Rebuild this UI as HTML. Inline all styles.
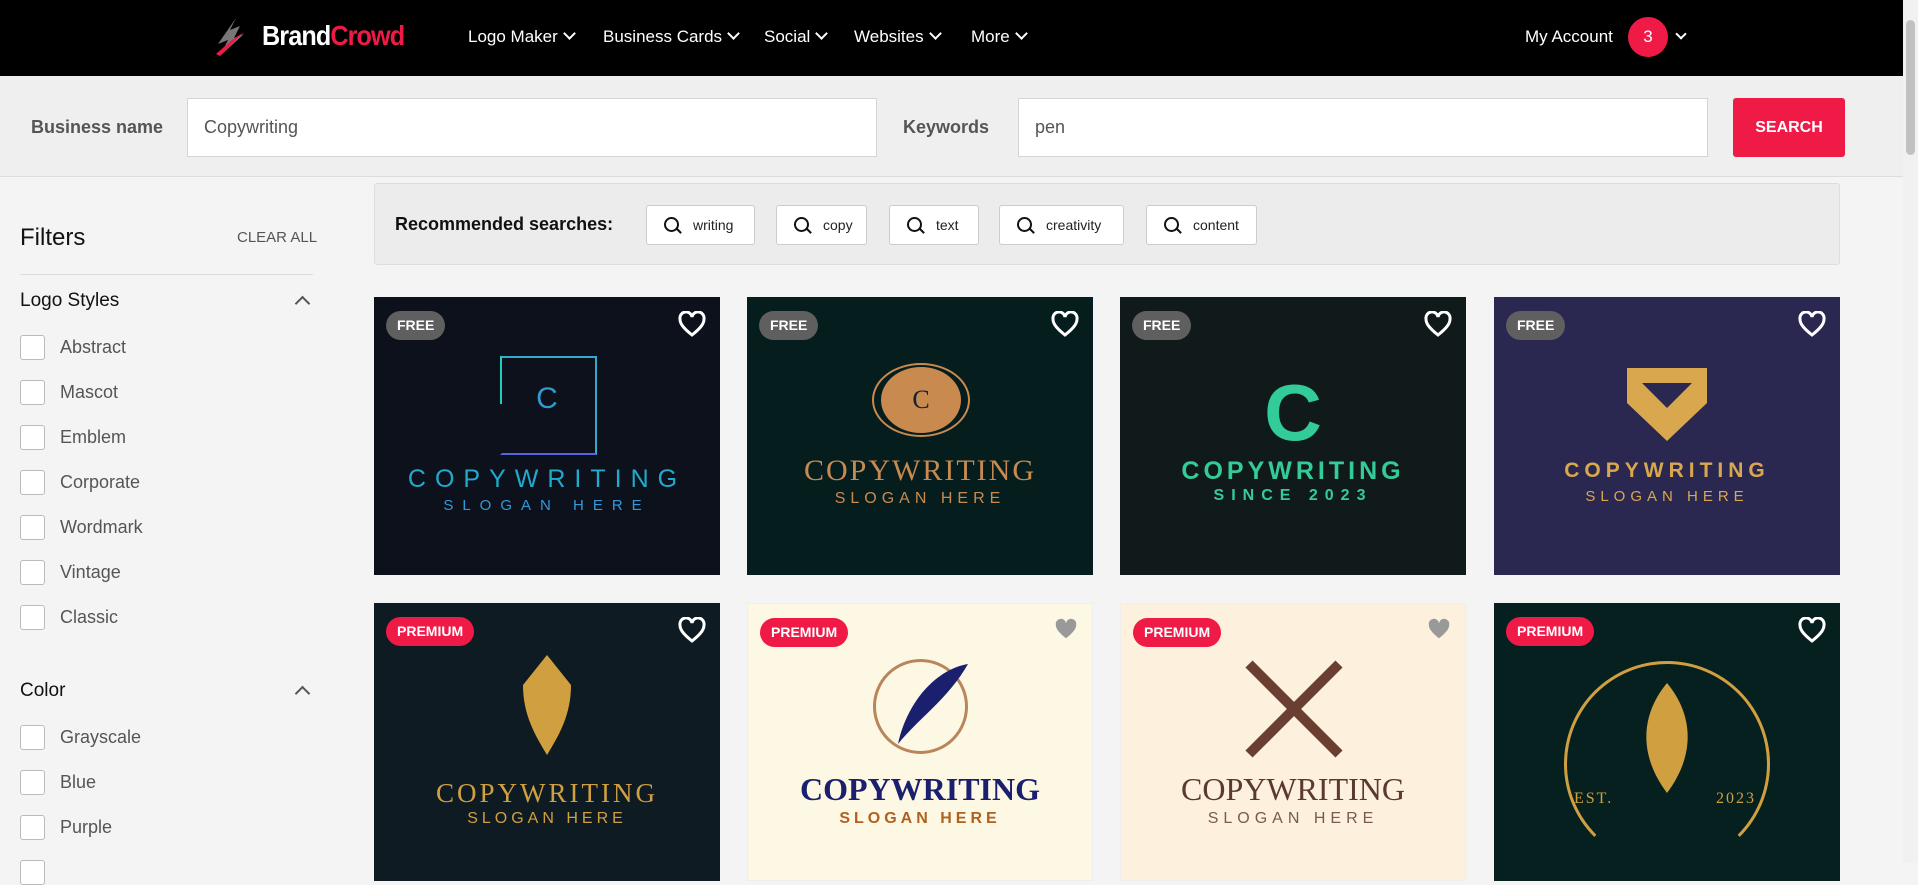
<!DOCTYPE html>
<html><head><meta charset="utf-8"><style>
*{box-sizing:border-box;margin:0;padding:0}
body{width:1918px;height:863px;overflow:hidden;background:#f4f4f4;font-family:"Liberation Sans",sans-serif;position:relative;color:#222}
.hdr{position:absolute;left:0;top:0;width:1903px;height:76px;background:#000}
.nav{position:absolute;top:27px;color:#fff;font-size:17px}
.nav:after{content:"";display:inline-block;width:7px;height:7px;border-right:2px solid #fff;border-bottom:2px solid #fff;transform:rotate(45deg);margin-left:7px;position:relative;top:-4px}
.nav.na:after{display:none}
.band{position:absolute;left:0;top:76px;width:1903px;height:101px;background:#efefef;border-bottom:1px solid #ddd}
.lbl{position:absolute;top:117px;font-size:18px;color:#555;font-weight:bold}
.inp{position:absolute;top:98px;height:59px;background:#fff;border:1px solid #d4d4d4;font-size:18px;color:#555;padding:18px 16px}
.btn{position:absolute;left:1733px;top:98px;width:112px;height:59px;background:#f01a47;color:#fff;font-weight:bold;font-size:16px;text-align:center;line-height:59px;border-radius:3px}
.side{position:absolute;left:20px}
.cb{position:absolute;left:20px;width:25px;height:25px;border:1px solid #bbb;border-radius:3px;background:#fff}
.cbl{position:absolute;left:60px;font-size:18px;color:#555}
.chev{position:absolute;left:297px;width:11px;height:11px;border-left:2px solid #555;border-top:2px solid #555;transform:rotate(45deg)}
.rec{position:absolute;left:374px;top:183px;width:1466px;height:82px;background:#ececec;border:1px solid #ddd;border-radius:3px}
.chip{position:absolute;top:205px;height:40px;background:#fff;border:1px solid #ccc;border-radius:3px;font-size:14px;line-height:38px;padding-left:46px;color:#222}
.chip:before{content:"";position:absolute;left:17px;top:11px;width:11px;height:11px;border:2px solid #111;border-radius:50%}
.chip:after{content:"";position:absolute;left:29px;top:24px;width:6px;height:2px;background:#111;transform:rotate(45deg)}
.card{position:absolute;width:346px;height:278px;overflow:hidden;text-align:center}
.bdg{position:absolute;left:12px;top:14px;height:29px;line-height:29px;padding:0 11px;border-radius:15px;color:#fff;font-weight:bold;font-size:14px}
.free{background:#5f5f5f}.prem{background:#f01a47}
.heart{position:absolute;right:14px;top:14px}
.t1{position:absolute;left:0;width:100%;font-size:27px;letter-spacing:5px}
.t2{position:absolute;left:0;width:100%;font-size:16px;letter-spacing:6px}
</style></head><body>
<div class="hdr">
<svg style="position:absolute;left:214px;top:18px" width="40" height="38" viewBox="0 0 40 38"><path d="M22 0 L16 12 L26 8 L20 20 L30 16 L6 38 L14 22 L4 26 Z" fill="#777"/><path d="M30 14 L6 38 L2 36 L18 22 Z" fill="#f01a47"/></svg>
<div style="position:absolute;left:262px;top:20px;font-size:28px;color:#fff;letter-spacing:-1px;font-weight:bold;transform:scaleX(0.9);transform-origin:left">Brand<span style="color:#f01a47">Crowd</span></div>
<div class="nav" style="left:468px">Logo Maker</div>
<div class="nav" style="left:603px">Business Cards</div>
<div class="nav" style="left:764px">Social</div>
<div class="nav" style="left:854px">Websites</div>
<div class="nav" style="left:971px">More</div>
<div class="nav na" style="left:1525px">My Account</div>
<div style="position:absolute;left:1628px;top:17px;width:40px;height:40px;border-radius:50%;background:#f01a47;color:#fff;text-align:center;line-height:40px;font-size:17px">3</div>
<div style="position:absolute;left:1677px;top:30px;width:8px;height:8px;border-right:2px solid #fff;border-bottom:2px solid #fff;transform:rotate(45deg)"></div>
</div>
<div style="position:absolute;left:1903px;top:0;width:15px;height:863px;background:#f1f1f1"><div style="margin:20px 3px;width:9px;height:135px;background:#c1c1c1;border-radius:5px"></div></div>
<div class="band"></div>
<div class="lbl" style="left:31px">Business name</div>
<div class="inp" style="left:187px;width:690px">Copywriting</div>
<div class="lbl" style="left:903px">Keywords</div>
<div class="inp" style="left:1018px;width:690px">pen</div>
<div class="btn">SEARCH</div>

<div class="side" style="top:224px;font-size:24px;color:#111">Filters</div>
<div class="side" style="left:237px;top:229px;font-size:15px;color:#555">CLEAR ALL</div>
<div style="position:absolute;left:20px;top:274px;width:293px;height:1px;background:#ddd"></div>
<div class="side" style="top:290px;font-size:19px;color:#111">Logo Styles</div>
<div class="chev" style="top:298px"></div>
<div class="cb" style="top:335px"></div><div class="cbl" style="top:337px">Abstract</div>
<div class="cb" style="top:380px"></div><div class="cbl" style="top:382px">Mascot</div>
<div class="cb" style="top:425px"></div><div class="cbl" style="top:427px">Emblem</div>
<div class="cb" style="top:470px"></div><div class="cbl" style="top:472px">Corporate</div>
<div class="cb" style="top:515px"></div><div class="cbl" style="top:517px">Wordmark</div>
<div class="cb" style="top:560px"></div><div class="cbl" style="top:562px">Vintage</div>
<div class="cb" style="top:605px"></div><div class="cbl" style="top:607px">Classic</div>
<div class="side" style="top:680px;font-size:19px;color:#111">Color</div>
<div class="chev" style="top:688px"></div>
<div class="cb" style="top:725px"></div><div class="cbl" style="top:727px">Grayscale</div>
<div class="cb" style="top:770px"></div><div class="cbl" style="top:772px">Blue</div>
<div class="cb" style="top:815px"></div><div class="cbl" style="top:817px">Purple</div>
<div class="cb" style="top:860px"></div>

<div class="rec"><div style="position:absolute;left:20px;top:30px;font-size:18px;font-weight:bold;color:#111">Recommended searches:</div></div>
<div class="chip" style="left:646px;width:109px">writing</div>
<div class="chip" style="left:776px;width:91px">copy</div>
<div class="chip" style="left:889px;width:90px">text</div>
<div class="chip" style="left:999px;width:125px">creativity</div>
<div class="chip" style="left:1146px;width:111px">content</div>

<!-- row 1 -->
<div class="card" style="left:374px;top:297px;background:#0c111c">
<div style="position:absolute;left:126px;top:59px;width:97px;height:99px;border:2px solid #3ac;border-left-color:transparent;border-bottom-color:#56d"></div>
<div style="position:absolute;left:126px;top:59px;width:2px;height:48px;background:#2cb"></div>
<div style="position:absolute;left:0;width:100%;top:85px;font-size:30px;color:#39c">C</div>
<div class="t1" style="top:168px;color:#2ac;font-size:25px;letter-spacing:9px">COPYWRITING</div>
<div class="t2" style="top:200px;color:#39d;letter-spacing:9px;font-size:15px">SLOGAN HERE</div>
<div class="bdg free">FREE</div><svg class="heart" width="28" height="26" viewBox="0 0 28 26"><path d="M14 24 C4 16 2 12 2 8 A6 6 0 0 1 14 6 A6 6 0 0 1 26 8 C26 12 24 16 14 24Z" fill="none" stroke="#fff" stroke-width="3"/></svg></div>
<div class="card" style="left:747px;top:297px;background:#061d1d">
<div style="position:absolute;left:125px;top:66px;width:98px;height:74px;border:2px solid #c98a50;border-radius:50%"></div>
<div style="position:absolute;left:134px;top:70px;width:80px;height:66px;background:#c98a50;border-radius:50%;font-size:26px;line-height:66px;color:#123;font-family:'Liberation Serif',serif">C</div>
<div class="t1" style="top:157px;color:#c98a50;font-family:'Liberation Serif',serif;font-size:30px;letter-spacing:2px">COPYWRITING</div>
<div class="t2" style="top:193px;color:#c98a50;letter-spacing:5px">SLOGAN HERE</div>
<div class="bdg free">FREE</div><svg class="heart" width="28" height="26" viewBox="0 0 28 26"><path d="M14 24 C4 16 2 12 2 8 A6 6 0 0 1 14 6 A6 6 0 0 1 26 8 C26 12 24 16 14 24Z" fill="none" stroke="#fff" stroke-width="3"/></svg></div>
<div class="card" style="left:1120px;top:297px;background:#111a1b">
<div style="position:absolute;left:0;width:100%;top:70px;font-size:80px;font-weight:bold;color:#3c9">C</div>
<div class="t1" style="top:160px;color:#3c9;font-weight:bold;font-size:25px;letter-spacing:4px">COPYWRITING</div>
<div class="t2" style="top:190px;color:#3c9;font-weight:bold;letter-spacing:7px">SINCE 2023</div>
<div class="bdg free">FREE</div><svg class="heart" width="28" height="26" viewBox="0 0 28 26"><path d="M14 24 C4 16 2 12 2 8 A6 6 0 0 1 14 6 A6 6 0 0 1 26 8 C26 12 24 16 14 24Z" fill="none" stroke="#fff" stroke-width="3"/></svg></div>
<div class="card" style="left:1494px;top:297px;background:#2a2850">
<svg style="position:absolute;left:128px;top:66px" width="90" height="80" viewBox="0 0 90 80"><path d="M5 5 H85 V40 L45 78 L5 40Z M20 20 L45 45 L70 20Z" fill="#d9a84e" fill-rule="evenodd"/></svg>
<div class="t1" style="top:162px;color:#d9a84e;font-weight:bold;font-size:21px;letter-spacing:5px">COPYWRITING</div>
<div class="t2" style="top:191px;color:#d9a84e;font-size:15px;letter-spacing:5px">SLOGAN HERE</div>
<div class="bdg free">FREE</div><svg class="heart" width="28" height="26" viewBox="0 0 28 26"><path d="M14 24 C4 16 2 12 2 8 A6 6 0 0 1 14 6 A6 6 0 0 1 26 8 C26 12 24 16 14 24Z" fill="none" stroke="#fff" stroke-width="3"/></svg></div>

<!-- row 2 -->
<div class="card" style="left:374px;top:603px;background:#0e1b22">
<svg style="position:absolute;left:145px;top:52px" width="56" height="100" viewBox="0 0 56 100"><path d="M28 0 L52 30 C52 60 40 80 28 100 C16 80 4 60 4 30Z" fill="#d0a040"/></svg>
<div class="t1" style="top:175px;color:#d0a040;font-family:'Liberation Serif',serif;font-size:27px;letter-spacing:3px">COPYWRITING</div>
<div class="t2" style="top:207px;color:#d0a040;letter-spacing:4px">SLOGAN HERE</div>
<div class="bdg prem">PREMIUM</div><svg class="heart" width="28" height="26" viewBox="0 0 28 26"><path d="M14 24 C4 16 2 12 2 8 A6 6 0 0 1 14 6 A6 6 0 0 1 26 8 C26 12 24 16 14 24Z" fill="none" stroke="#fff" stroke-width="3"/></svg></div>
<div class="card" style="left:747px;top:603px;background:#fdf8e4;border:1px solid #eee">
<div style="position:absolute;left:125px;top:55px;width:95px;height:95px;border:3px solid #b8865a;border-radius:50%"></div>
<svg style="position:absolute;left:130px;top:55px" width="100" height="100" viewBox="0 0 100 100"><path d="M90 5 C60 10 30 40 20 85 C40 60 70 40 90 5Z" fill="#1a1f6e"/></svg>
<div class="t1" style="top:167px;color:#1a1f6e;font-family:'Liberation Serif',serif;font-weight:bold;font-size:32px;letter-spacing:0">COPYWRITING</div>
<div class="t2" style="top:206px;color:#b06020;font-weight:bold;letter-spacing:4px">SLOGAN HERE</div>
<div class="bdg prem">PREMIUM</div><svg class="heart" width="24" height="22" viewBox="0 0 28 26"><path d="M14 24 C4 16 2 12 2 8 A6 6 0 0 1 14 6 A6 6 0 0 1 26 8 C26 12 24 16 14 24Z" fill="#999"/></svg></div>
<div class="card" style="left:1120px;top:603px;background:#fdf0dc;border:1px solid #eee">
<svg style="position:absolute;left:118px;top:50px" width="110" height="110" viewBox="0 0 110 110"><path d="M10 10 L100 100 M100 10 L10 100" stroke="#6a3e30" stroke-width="10"/></svg>
<div class="t1" style="top:167px;color:#5a3a30;font-family:'Liberation Serif',serif;font-size:32px;letter-spacing:0">COPYWRITING</div>
<div class="t2" style="top:206px;color:#7a5a50;letter-spacing:5px">SLOGAN HERE</div>
<div class="bdg prem">PREMIUM</div><svg class="heart" width="24" height="22" viewBox="0 0 28 26"><path d="M14 24 C4 16 2 12 2 8 A6 6 0 0 1 14 6 A6 6 0 0 1 26 8 C26 12 24 16 14 24Z" fill="#999"/></svg></div>
<div class="card" style="left:1494px;top:603px;background:#062020">
<div style="position:absolute;left:70px;top:58px;width:206px;height:206px;border:3px solid #d0a040;border-radius:50%;border-bottom-color:transparent"></div>
<svg style="position:absolute;left:138px;top:80px" width="70" height="130" viewBox="0 0 70 130"><path d="M35 0 C60 30 65 70 35 110 C5 70 10 30 35 0Z" fill="#d0a040"/></svg>
<div style="position:absolute;left:80px;top:187px;color:#d0a040;font-family:'Liberation Serif',serif;font-size:16px;letter-spacing:2px">EST.</div>
<div style="position:absolute;left:222px;top:187px;color:#d0a040;font-family:'Liberation Serif',serif;font-size:16px;letter-spacing:2px">2023</div>
<div class="bdg prem">PREMIUM</div><svg class="heart" width="28" height="26" viewBox="0 0 28 26"><path d="M14 24 C4 16 2 12 2 8 A6 6 0 0 1 14 6 A6 6 0 0 1 26 8 C26 12 24 16 14 24Z" fill="none" stroke="#fff" stroke-width="3"/></svg></div>
</body></html>
